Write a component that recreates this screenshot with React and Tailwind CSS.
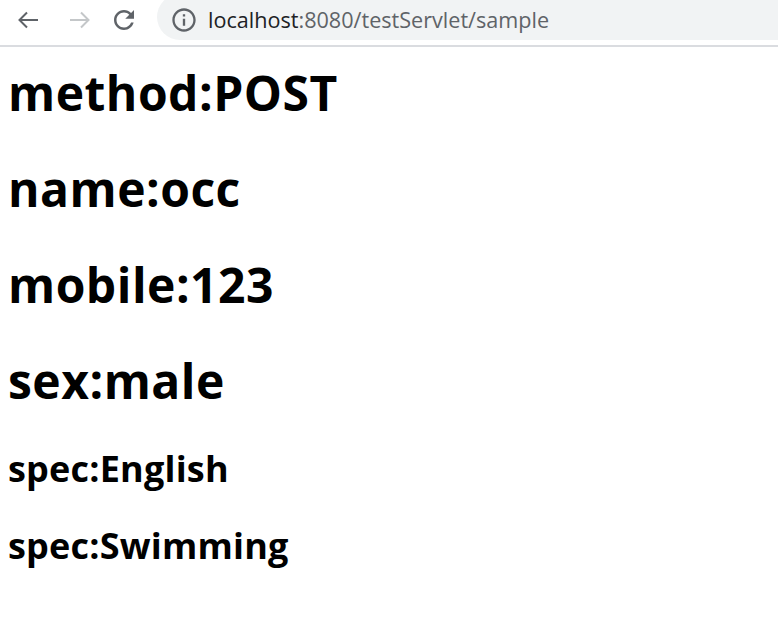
import React from 'react';

const fields = [
  { tag: 'h1', text: 'method:POST' },
  { tag: 'h1', text: 'name:occ' },
  { tag: 'h1', text: 'mobile:123' },
  { tag: 'h1', text: 'sex:male' },
];

const specs = ['spec:English', 'spec:Swimming'];

const BrowserBar = () => (
  <div className="h-[47px] border-b-2 border-[#dadce0] bg-white flex items-start overflow-hidden">
    {/* back */}
    <div className="w-[56px] h-[40px] flex items-center justify-center">
      <svg width="22" height="18" viewBox="0 0 22 18" fill="none" stroke="#5f6368" strokeWidth="2">
        <path d="M21 9H3M10 1.5L2.5 9L10 16.5" />
      </svg>
    </div>
    {/* forward */}
    <div className="w-[48px] h-[40px] flex items-center justify-center">
      <svg width="22" height="18" viewBox="0 0 22 18" fill="none" stroke="#c4c7c9" strokeWidth="2">
        <path d="M1 9H19M12 1.5L19.5 9L12 16.5" />
      </svg>
    </div>
    {/* reload */}
    <div className="w-[40px] h-[40px] flex items-center justify-center">
      <svg width="30" height="30" viewBox="0 0 24 24" fill="#5f6368">
        <path d="M17.65 6.35C16.2 4.9 14.21 4 12 4c-4.42 0-7.99 3.58-7.99 8s3.57 8 7.99 8c3.73 0 6.84-2.55 7.73-6h-2.08c-.82 2.33-3.04 4-5.65 4-3.31 0-6-2.69-6-6s2.69-6 6-6c1.66 0 3.14.69 4.22 1.78L13 11h7V4l-2.35 2.35z" />
      </svg>
    </div>
    <div className="ml-[13px] -mt-[6px] h-[46px] flex-1 mr-[-40px] rounded-full bg-[#f1f3f4] flex items-center pl-[13px] pt-[6px]">
      <svg width="28" height="28" viewBox="0 0 24 24" fill="#5f6368">
        <path d="M11 7h2v2h-2zm0 4h2v6h-2zm1-9C6.48 2 2 6.48 2 12s4.48 10 10 10 10-4.48 10-10S17.52 2 12 2zm0 18c-4.41 0-8-3.59-8-8s3.59-8 8-8 8 3.59 8 8-3.59 8-8 8z" />
      </svg>
      <span className="ml-[10px] text-[21.6px] font-['Open_Sans',sans-serif] leading-none">
        <span className="text-[#202124]">localhost</span>
        <span className="text-[#5f6368]">:8080/testServlet/sample</span>
      </span>
    </div>
  </div>
);

export default function App() {
  return (
    <div className="w-[778px] h-[628px] bg-white overflow-hidden">
      <BrowserBar />
      <div className="px-2 font-['Open_Sans',sans-serif] font-bold text-black">
        {fields.map((f) => (
          <h1 key={f.text} className="text-[48px] leading-[64px] mt-[14px] mb-[32px] tracking-[0.5px]">
            {f.text}
          </h1>
        ))}
        {specs.map((s) => (
          <h2 key={s} className="text-[36px] leading-[48px] mb-[29px] tracking-[0.2px]">
            {s}
          </h2>
        ))}
      </div>
    </div>
  );
}
